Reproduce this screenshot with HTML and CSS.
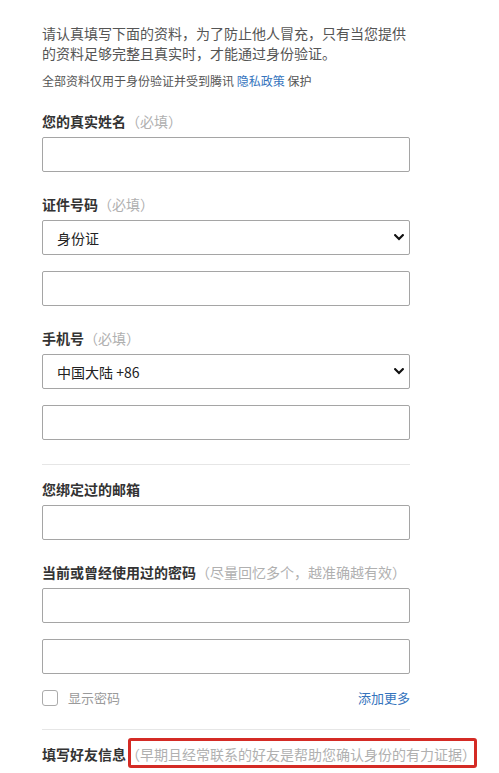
FILE: index.html
```html
<!DOCTYPE html>
<html lang="zh-CN">
<head>
<meta charset="utf-8">
<title>身份验证</title>
<link rel="stylesheet" href="styles.css">
</head>
<body>
<div class="page">
  <p class="intro">请认真填写下面的资料，为了防止他人冒充，只有当您提供的资料足够完整且真实时，才能通过身份验证。</p>
  <p class="note">全部资料仅用于身份验证并受到腾讯 <a class="link" href="#">隐私政策</a> 保护</p>

  <div class="field first">
    <div class="label">您的真实姓名<span class="hint">（必填）</span></div>
    <input class="control" type="text">
  </div>

  <div class="field">
    <div class="label">证件号码<span class="hint">（必填）</span></div>
    <div class="select-wrap control">
      <select class="select"><option>身份证</option></select>
      <svg class="chevron" width="10" height="7" viewBox="0 0 10 7"><polyline points="1.2,1.2 5,5 8.8,1.2" fill="none" stroke="#111" stroke-width="2.2" stroke-linecap="square"/></svg>
    </div>
    <input class="control" type="text">
  </div>

  <div class="field">
    <div class="label">手机号<span class="hint">（必填）</span></div>
    <div class="select-wrap control">
      <select class="select"><option>中国大陆 +86</option></select>
      <svg class="chevron" width="10" height="7" viewBox="0 0 10 7"><polyline points="1.2,1.2 5,5 8.8,1.2" fill="none" stroke="#111" stroke-width="2.2" stroke-linecap="square"/></svg>
    </div>
    <input class="control" type="text">
  </div>

  <div class="divider"></div>

  <div class="field after-divider">
    <div class="label">您绑定过的邮箱</div>
    <input class="control" type="text">
  </div>

  <div class="field">
    <div class="label">当前或曾经使用过的密码<span class="hint">（尽量回忆多个，越准确越有效）</span></div>
    <input class="control" type="password">
    <input class="control" type="password">
    <div class="options control">
      <label class="check"><span class="box"></span><span class="check-text">显示密码</span></label>
      <a class="link more" href="#">添加更多</a>
    </div>
  </div>

  <div class="divider divider-2"></div>

  <div class="field after-divider">
    <div class="label">填写好友信息<span class="hint marked">（早期且经常联系的好友是帮助您确认身份的有力证据）</span></div>
  </div>
</div>
</body>
</html>
```

FILE: styles.css
```css
html, body {
  margin: 0;
  padding: 0;
  background: #ffffff;
}

body {
  font-family: "Noto Sans CJK SC", "Noto Sans", sans-serif;
  color: #333333;
}

.page {
  width: 368px;
  padding: 23px 0 0 42px;
}

.intro {
  margin: 0;
  font-size: 14px;
  line-height: 20px;
  color: #555555;
}

.note {
  margin: 9px 0 0;
  font-size: 12px;
  line-height: 18px;
  color: #555555;
}

.link {
  color: #3574bd;
  text-decoration: none;
}

.field {
  margin-top: 22px;
}

.field.first {
  margin-top: 21px;
}

.field.after-divider {
  margin-top: 0;
}

.label {
  font-size: 14px;
  line-height: 20px;
  font-weight: 700;
  color: #333333;
  margin-bottom: 6px;
  white-space: nowrap;
}

.hint {
  font-weight: 400;
  color: #b0b0b0;
}

.marked {
  position: relative;
}

.marked::after {
  content: "";
  position: absolute;
  left: 2px;
  right: -1px;
  top: -6px;
  bottom: -4px;
  border: 3px solid #d42b25;
  border-radius: 3px;
}

.control {
  display: block;
  box-sizing: border-box;
  width: 368px;
  margin: 0;
}

input.control {
  height: 35px;
  border: 1px solid #a5a5a5;
  border-radius: 2px;
  padding: 0 14px;
  font-family: inherit;
  font-size: 14px;
  background: #ffffff;
  outline: none;
}

.control + .control {
  margin-top: 16px;
}

.select-wrap {
  position: relative;
  height: 35px;
}

.select {
  -webkit-appearance: none;
  appearance: none;
  display: block;
  box-sizing: border-box;
  width: 100%;
  height: 35px;
  margin: 0;
  border: 1px solid #a5a5a5;
  border-radius: 2px;
  padding: 0 30px 0 14px;
  font-family: inherit;
  font-size: 14px;
  color: #222222;
  background: #ffffff;
  outline: none;
}

.chevron {
  position: absolute;
  right: 6px;
  top: 14px;
  pointer-events: none;
}

.options {
  display: flex;
  justify-content: space-between;
  align-items: center;
  height: 16px;
}

.check {
  display: flex;
  align-items: center;
  gap: 10px;
}

.box {
  width: 16px;
  height: 16px;
  box-sizing: border-box;
  border: 1px solid #ababab;
  border-radius: 3px;
  background: #ffffff;
}

.check-text {
  font-size: 13px;
  line-height: 16px;
  color: #9a9a9a;
}

.more {
  font-size: 13px;
  line-height: 16px;
}

.divider {
  height: 0;
  border-top: 1px solid #e6e6e6;
  margin: 24px 0 14px;
}

.divider-2 {
  margin-top: 23px;
}
```
